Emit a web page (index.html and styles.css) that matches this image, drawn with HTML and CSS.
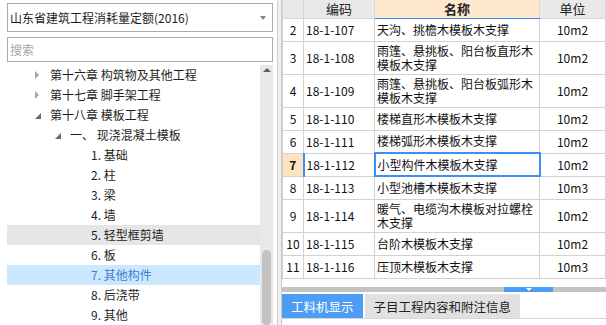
FILE: index.html
```html
<!DOCTYPE html>
<html lang="zh-CN">
<head>
<meta charset="UTF-8" />
<title>定额库</title>
<link rel="stylesheet" href="styles.css">
</head>
<body>
<div class="app">
  <aside class="side">
    <div class="combo">
      <span>山东省建筑工程消耗量定额(2016)</span>
      <i class="caret"></i>
    </div>
    <div class="search">搜索</div>
    <div class="tree-wrap">
      <ul class="tree">
        <li class="node l1"><i class="tw closed"></i>第十六章 构筑物及其他工程</li>
        <li class="node l1"><i class="tw closed"></i>第十七章 脚手架工程</li>
        <li class="node l1"><i class="tw open"></i>第十八章 模板工程</li>
        <li class="node l2"><i class="tw open"></i>一、 现浇混凝土模板</li>
        <li class="node l3">1. 基础</li>
        <li class="node l3">2. 柱</li>
        <li class="node l3">3. 梁</li>
        <li class="node l3">4. 墙</li>
        <li class="node l3 hover">5. 轻型框剪墙</li>
        <li class="node l3">6. 板</li>
        <li class="node l3 selected">7. 其他构件</li>
        <li class="node l3">8. 后浇带</li>
        <li class="node l3">9. 其他</li>
      </ul>
      <div class="vscroll">
        <div class="vs-up"><i></i></div>
        <div class="vs-thumb"></div>
      </div>
    </div>
  </aside>
  <div class="splitter"></div>
  <main class="main">
    <div class="grid-wrap">
      <table class="grid">
        <colgroup>
          <col class="c-no"><col class="c-code"><col class="c-name"><col>
        </colgroup>
        <thead>
          <tr><th></th><th>编码</th><th class="sorted">名称</th><th>单位</th></tr>
        </thead>
        <tbody>
          <tr><td class="no">2</td><td>18-1-107</td><td>天沟、挑檐木模板木支撑</td><td class="unit">10m2</td></tr>
          <tr><td class="no">3</td><td>18-1-108</td><td>雨篷、悬挑板、阳台板直形木模板木支撑</td><td class="unit">10m2</td></tr>
          <tr><td class="no">4</td><td>18-1-109</td><td>雨篷、悬挑板、阳台板弧形木模板木支撑</td><td class="unit">10m2</td></tr>
          <tr><td class="no">5</td><td>18-1-110</td><td>楼梯直形木模板木支撑</td><td class="unit">10m2</td></tr>
          <tr><td class="no">6</td><td>18-1-111</td><td>楼梯弧形木模板木支撑</td><td class="unit">10m2</td></tr>
          <tr class="current"><td class="no">7</td><td class="code">18-1-112</td><td class="focus">小型构件木模板木支撑</td><td class="unit">10m2</td></tr>
          <tr><td class="no">8</td><td>18-1-113</td><td>小型池槽木模板木支撑</td><td class="unit">10m3</td></tr>
          <tr><td class="no">9</td><td>18-1-114</td><td>暖气、电缆沟木模板对拉螺栓木支撑</td><td class="unit">10m2</td></tr>
          <tr><td class="no">10</td><td>18-1-115</td><td>台阶木模板木支撑</td><td class="unit">10m2</td></tr>
          <tr><td class="no">11</td><td>18-1-116</td><td>压顶木模板木支撑</td><td class="unit">10m3</td></tr>
        </tbody>
      </table>
    </div>
    <div class="hbar"><div class="hbar-handle"><i></i></div></div>
    <div class="tabs">
      <button class="tab active">工料机显示</button>
      <button class="tab">子目工程内容和附注信息</button>
    </div>
  </main>
</div>
</body>
</html>
```

FILE: styles.css
```css
/* Base */
:root {
  --line: #d2d2d2;
  --blue: #3d8ff2;
  --text: #1e1e1e;
}

* {
  box-sizing: border-box;
}

body {
  margin: 0;
  width: 606px;
  height: 325px;
  overflow: hidden;
  background: #fff;
  color: var(--text);
  font-family: "Noto Sans CJK SC", "Noto Sans", sans-serif;
  font-size: 12px;
}

.app {
  display: flex;
  height: 325px;
}

/* Left side: combo, search, tree */
.side {
  width: 277px;
  display: flex;
  flex-direction: column;
}

.combo {
  margin: 3px 4px 0 7px;
  height: 29px;
  border: 1px solid #ababab;
  display: flex;
  align-items: center;
  justify-content: space-between;
  padding: 0 6px 0 2px;
  font-size: 12px;
}
.caret {
  width: 0;
  height: 0;
  border-left: 3px solid transparent;
  border-right: 3px solid transparent;
  border-top: 4px solid #888;
}

.search {
  margin: 5px 4px 0 7px;
  height: 25px;
  border: 1px solid #ababab;
  padding: 0 2px;
  line-height: 23px;
  color: #a8a8a8;
}

.tree-wrap {
  flex: 1;
  display: flex;
  margin: 3px 4px 0 7px;
  min-height: 0;
}

.tree {
  flex: 1;
  list-style: none;
  margin: 0;
  padding: 0;
}
.node {
  height: 20px;
  line-height: 20px;
  display: flex;
  align-items: center;
  white-space: nowrap;
}
.node.l1 { padding-left: 28px; }
.node.l2 { padding-left: 48px; }
.node.l3 { padding-left: 84px; }
.node.hover { background: #e6e6e6; }
.node.selected {
  background: #cce8ff;
  color: #3c7ed4;
}

.tw {
  display: inline-block;
  width: 0;
  height: 0;
  margin-right: 11px;
}
.tw.closed {
  border-top: 4px solid transparent;
  border-bottom: 4px solid transparent;
  border-left: 4px solid #a6a6a6;
}
.tw.open {
  border-style: solid;
  border-width: 0 0 6px 6px;
  border-color: transparent transparent #6a6a6a transparent;
  margin-right: 9px;
  margin-top: 2px;
}

/* Tree scrollbar */
.vscroll {
  width: 13px;
  background: #e8e8e8;
  display: flex;
  flex-direction: column;
  align-items: center;
}
.vs-up {
  height: 13px;
  display: flex;
  align-items: center;
  justify-content: center;
}
.vs-up i {
  width: 0;
  height: 0;
  border-left: 4px solid transparent;
  border-right: 4px solid transparent;
  border-bottom: 4px solid #606060;
}
.vs-thumb {
  margin-top: 175px;
  width: 9px;
  height: 100px;
  border-radius: 5px;
  background: #c2c2c2;
}

.splitter {
  width: 4px;
  background: #f0f0f0;
  border-left: 1px solid #d0d0d0;
}

/* Right side: grid and detail tabs */
.main {
  flex: 1;
  display: flex;
  flex-direction: column;
  border-left: 1px solid #c8c8c8;
  min-width: 0;
}

.grid-wrap {
  height: 287px;
  overflow: hidden;
}

.grid {
  width: 100%;
  border-collapse: collapse;
  table-layout: fixed;
}
.c-no { width: 21px; }
.c-code { width: 71px; }
.c-name { width: 165px; }

.grid th {
  height: 18px;
  padding: 0;
  background: #e9e9e9;
  border: 1px solid #d8d8d8;
  border-top: 0;
  font-weight: normal;
  font-size: 13px;
  line-height: 16px;
  color: #222;
}
.grid th.sorted {
  background: #fde8cd;
  font-weight: bold;
  border-bottom: 1px solid var(--blue);
}

.grid td {
  height: 23px;
  padding: 2px;
  line-height: 14px;
  border: 1px solid var(--line);
  vertical-align: middle;
  color: #111;
}
.grid td.no {
  text-align: center;
  padding: 0;
}
.grid td.unit {
  text-align: center;
}

.grid tr.current td.no {
  background: #fde3c1;
  font-weight: bold;
}
.grid tr.current td.code {
  border-left: 2px solid var(--blue);
}
.grid tr.current td.focus {
  border: 2px solid var(--blue);
}

.hbar {
  height: 5px;
  background: #c3c3c3;
  display: flex;
}
.hbar-handle {
  margin-left: 222px;
  width: 49px;
  background: #4a9cf5;
  display: flex;
  justify-content: center;
  padding-top: 1px;
}
.hbar-handle i {
  width: 0;
  height: 0;
  border-left: 3px solid transparent;
  border-right: 3px solid transparent;
  border-top: 3px solid #fff;
}

.tabs {
  display: flex;
  gap: 2px;
  padding-top: 2px;
  height: 27px;
  border-bottom: 1px solid #d6d6d6;
}
.tab {
  height: 24px;
  border: 0;
  padding: 0 9px;
  font-family: inherit;
  font-size: 12.5px;
  background: #e1e1e1;
  color: #222;
}
.tab.active {
  background: #4d9df5;
  color: #fff;
}
```
